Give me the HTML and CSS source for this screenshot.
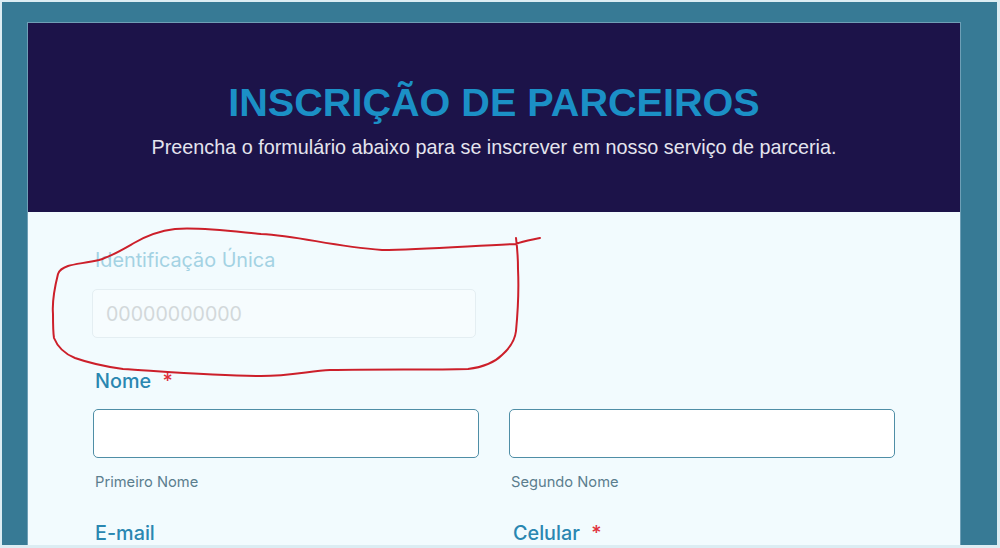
FILE: index.html
```html
<!DOCTYPE html>
<html lang="pt">
<head>
<meta charset="utf-8">
<link rel="stylesheet" href="styles.css">
</head>
<body>
<div class="screen">
  <div class="card">
    <header class="hero">
      <h1 class="title">INSCRIÇÃO DE PARCEIROS</h1>
      <p class="subtitle">Preencha o formulário abaixo para se inscrever em nosso serviço de parceria.</p>
    </header>
    <form class="form">
      <div class="field field-id">
        <label class="label label-muted">Identificação Única</label>
        <input class="input input-id" type="text" placeholder="00000000000">
      </div>
      <div class="field">
        <label class="label">Nome <span class="req">*</span></label>
        <div class="grid2">
          <div class="sub">
            <input class="input" type="text">
            <span class="hint">Primeiro Nome</span>
          </div>
          <div class="sub">
            <input class="input" type="text">
            <span class="hint">Segundo Nome</span>
          </div>
        </div>
      </div>
      <div class="grid2 row-labels">
        <label class="label">E-mail</label>
        <label class="label">Celular <span class="req">*</span></label>
      </div>
    </form>
  </div>
  <svg class="mark" width="1000" height="548" viewBox="0 0 1000 548">
    <path d="M540 238 C530 240 522 241 516 244 C470 246 420 250 382 250 C330 246 300 236 261 234 C230 231 200 227 175 229 C158 231 146 236 134 243 C120 251 110 257 99 260 C85 263 74 264 68 266 C62 268 59 271 58 274 C54 290 52 302 53 314 C53 324 53 332 54 338 C58 348 65 354 75 358 C92 364 108 367 123 369 C170 372 220 376 261 376 C290 376 310 371 330 370 C380 369 430 370 468 369 C485 367 495 362 502 355 C511 347 515 340 516 331 C518 310 519 290 518 269 C518 256 517 246 516 238" fill="none" stroke="#cc1f2a" stroke-width="2" stroke-linecap="round"/>
  </svg>
</div>
</body>
</html>
```
FILE: styles.css
```css
* { box-sizing: border-box; }
html, body { margin: 0; padding: 0; }
body {
  width: 1000px;
  height: 548px;
  overflow: hidden;
  background: #dcedf3;
  padding: 2px 3px 3px 2px;
}
.screen {
  position: relative;
  height: 543px;
  background: #377a95;
  padding: 21px 37px 0 26px;
  overflow: hidden;
}
.card {
  width: 932px;
  height: 600px;
  background: #f2fbfe;
  box-shadow: 0 0 0 1px #6f9fb6;
}
.hero {
  height: 189px;
  background: #1c1349;
  display: flex;
  flex-direction: column;
  align-items: center;
  padding-top: 57px;
  font-family: "Liberation Sans", Arial, sans-serif;
}
.title {
  margin: 0;
  font-size: 39.6px;
  line-height: 44px;
  font-weight: 700;
  color: #1b90c6;
}
.subtitle {
  margin: 12px 0 0;
  font-size: 19.8px;
  line-height: 22px;
  color: #e4e4ee;
}
.form {
  padding: 36px 64px 0 65px;
  font-family: Inter, "Noto Sans", sans-serif;
  display: flex;
  flex-direction: column;
}
.field { display: flex; flex-direction: column; }
.label {
  font-size: 19.8px;
  line-height: 24px;
  font-weight: 500;
  color: #2a87b1;
  padding-left: 2px;
}
.label-muted { color: #a3d2e3; font-weight: 400; }
.req { color: #e0323c; margin-left: 6px; }
.input {
  display: block;
  width: 386px;
  height: 49px;
  margin: 0;
  border: 1.5px solid #4f8ea6;
  border-radius: 5px;
  background: #ffffff;
  font-family: inherit;
  font-size: 19.6px;
  padding: 0 13px;
}
.field-id { margin-bottom: 31px; }
.field-id .label { margin-bottom: 17px; }
.input-id {
  width: 384px;
  margin-left: -1px;
  border: 1px solid #e4eef2;
  background: #f6fcfe;
}
.input-id::placeholder { color: #d2d8da; }
.field .label + .grid2 { margin-top: 16px; }
.grid2 {
  display: grid;
  grid-template-columns: 386px 386px;
  column-gap: 30px;
}
.sub { display: flex; flex-direction: column; }
.hint {
  margin-top: 15px;
  padding-left: 2px;
  font-size: 14.7px;
  line-height: 18px;
  color: #5b7e8e;
}
.row-labels { margin-top: 30px; }
.row-labels .label:last-child { padding-left: 4px; }
.mark {
  position: absolute;
  left: -2px;
  top: -2px;
  pointer-events: none;
}
```
